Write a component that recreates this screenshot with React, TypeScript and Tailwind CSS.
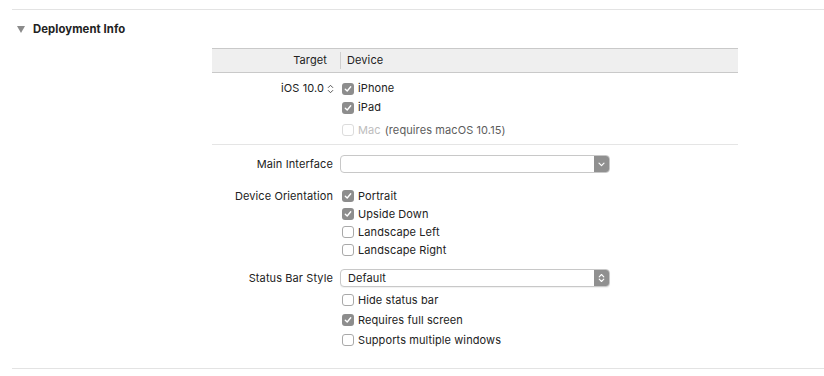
import React from "react";

const Check = ({ on, disabled }: { on?: boolean; disabled?: boolean }) =>
  on ? (
    <span className="flex h-[12px] w-[12px] items-center justify-center rounded-[3px] bg-[#8d8d8d]">
      <svg width="8" height="8" viewBox="0 0 8 8">
        <path d="M1.3 4.2 L3.2 6 L6.7 1.8" fill="none" stroke="#fff" strokeWidth="1.4" strokeLinecap="round" strokeLinejoin="round" />
      </svg>
    </span>
  ) : (
    <span
      className={`h-[12px] w-[12px] rounded-[3px] border bg-white ${
        disabled ? "border-[#dcdcdc]" : "border-[#a9a9a9]"
      }`}
    />
  );

const Option = ({ label, on, h = "h-[18px]" }: { label: string; on?: boolean; h?: string }) => (
  <div className={`flex ${h} items-center`}>
    <div className="w-[128px]" />
    <div className="flex items-center gap-[4px] pl-[2px]">
      <Check on={on} />
      <span>{label}</span>
    </div>
  </div>
);

const App = () => {
  return (
    <div className="h-[376px] w-[824px] overflow-hidden bg-white text-[11px] tracking-[0.1px] text-[#222] [font-family:Inter,'Liberation_Sans',sans-serif]">
      <div className="ml-[12px] mt-[9px] border-t border-[#e3e3e3]" />
      {/* section header */}
      <div className="flex h-[38px] items-center pl-[17px]">
        <svg width="8" height="7" viewBox="0 0 8 7" className="mr-[8px]">
          <path d="M0 0 H8 L4 7 Z" fill="#8b8b8b" />
        </svg>
        <span className="text-[11.3px] font-bold">Deployment Info</span>
      </div>

      <div className="ml-[212px] w-[526px]">
        <div className="flex h-[25px] items-center border-y border-[#c9c9c9] bg-[#efefef]">
          <div className="w-[128px] pr-[13px] text-right">Target</div>
          <div className="flex h-[17px] items-center border-l border-[#cfcfcf] pl-[6px]">Device</div>
        </div>

        <div className="border-b border-[#e5e5e5] pb-[5px] pt-[6px]">
          <div className="flex h-[19px] items-center">
            <div className="flex w-[128px] items-center justify-end gap-[3px] pr-[6px]">
              <span>iOS 10.0</span>
              <svg width="7" height="10" viewBox="0 0 7 10">
                <path d="M1 3.8 L3.5 1.3 L6 3.8 M1 6.2 L3.5 8.7 L6 6.2" fill="none" stroke="#555" strokeWidth="1" strokeLinejoin="round" />
              </svg>
            </div>
            <div className="flex items-center gap-[4px] pl-[2px]">
              <Check on />
              <span>iPhone</span>
            </div>
          </div>
          <Option label="iPad" on h="h-[19px]" />
          <div className="mt-[3px] flex h-[19px] items-center pt-[1px]">
            <div className="w-[128px]" />
            <div className="flex items-center gap-[4px] pl-[2px]">
              <Check disabled />
              <span className="text-[#bdbdbd]">Mac</span>
              <span className="text-[#5c5c5c]">(requires macOS 10.15)</span>
            </div>
          </div>
        </div>

        <div className="mt-[10px] flex h-[18px] items-center">
          <div className="w-[128px] pr-[7px] text-right">Main Interface</div>
          <div className="flex h-[18px] w-[270px] items-stretch overflow-hidden rounded-[4px] border border-[#c8c8c8] bg-white">
            <div className="flex-1" />
            <div className="flex w-[15px] items-center justify-center bg-[#909090]">
              <svg width="7" height="5" viewBox="0 0 7 5">
                <path d="M1 1.2 L3.5 3.7 L6 1.2" fill="none" stroke="#fff" strokeWidth="1.2" strokeLinecap="round" strokeLinejoin="round" />
              </svg>
            </div>
          </div>
        </div>

        <div className="mt-[14px] flex h-[18px] items-center">
          <div className="w-[128px] pr-[7px] text-right">Device Orientation</div>
          <div className="flex items-center gap-[4px] pl-[2px]">
            <Check on />
            <span>Portrait</span>
          </div>
        </div>
        <Option label="Upside Down" on />
        <Option label="Landscape Left" />
        <Option label="Landscape Right" />

        <div className="mt-[10px] flex h-[18px] items-center">
          <div className="w-[128px] pr-[7px] text-right">Status Bar Style</div>
          <div className="flex h-[18px] w-[270px] items-stretch overflow-hidden rounded-[4px] border border-[#c8c8c8] bg-white shadow-[0_1px_1px_rgba(0,0,0,0.06)]">
            <div className="flex flex-1 items-center pl-[7px]">Default</div>
            <div className="flex w-[15px] items-center justify-center bg-[#909090]">
              <svg width="7" height="10" viewBox="0 0 7 10">
                <path d="M1.2 3.8 L3.5 1.5 L5.8 3.8 M1.2 6.2 L3.5 8.5 L5.8 6.2" fill="none" stroke="#fff" strokeWidth="1.1" strokeLinecap="round" strokeLinejoin="round" />
              </svg>
            </div>
          </div>
        </div>
        <div className="mt-[3px]">
          <Option label="Hide status bar" h="h-[20px]" />
          <Option label="Requires full screen" on h="h-[20px]" />
          <Option label="Supports multiple windows" h="h-[20px]" />
        </div>
      </div>

      <div className="ml-[12px] mt-[18px] border-t border-[#e3e3e3]" />
    </div>
  );
};

export default App;
